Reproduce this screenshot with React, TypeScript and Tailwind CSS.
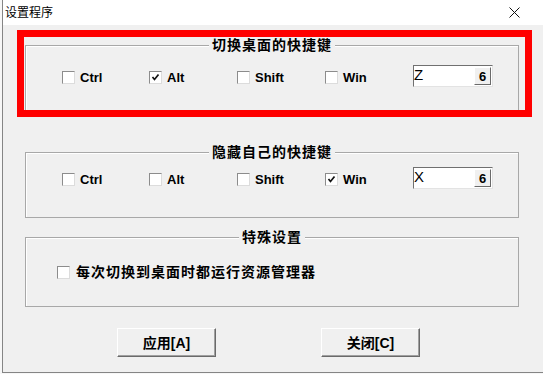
function Check({ checked }: { checked?: boolean }) {
  return (
    <span className="w-[13px] h-[13px] shrink-0 bg-white border border-t-[#8c8c8c] border-l-[#8c8c8c] border-b-[#dcdcdc] border-r-[#dcdcdc] flex items-center justify-center">
      {checked && (
        <svg width="9" height="9" viewBox="0 0 9 9">
          <path d="M1.5 4 L3.5 6.5 L7.5 1.5" stroke="#111" strokeWidth="1.7" fill="none" />
        </svg>
      )}
    </span>
  )
}

function KeyBox({ letter }: { letter: string }) {
  return (
    <div className="w-[80px] h-[22px] bg-white border border-t-[#707070] border-l-[#707070] border-b-[#e3e3e3] border-r-[#e3e3e3] flex items-start justify-between">
      <span className="pt-[1px] text-[15px] leading-[15px] text-black">{letter}</span>
      <span className="mt-[1px] mr-[1px] w-[17px] h-[18px] bg-[#f0f0f0] border border-t-white border-l-white border-b-[#6a6a6a] border-r-[#6a6a6a] flex items-center justify-center text-[13px] font-bold leading-none">
        6
      </span>
    </div>
  )
}

function Row({ checked, letter, className }: { checked: string; letter: string; className: string }) {
  const keys = [
    { k: 'Ctrl', w: 'w-[87px]' },
    { k: 'Alt', w: 'w-[88px]' },
    { k: 'Shift', w: 'w-[88px]' },
    { k: 'Win', w: 'w-[88px]' },
  ]
  return (
    <div className={`flex items-center pl-[36px] h-[22px] ${className}`}>
      {keys.map((item) => (
        <div key={item.k} className={`flex items-center gap-[5px] pt-[3px] ${item.w}`}>
          <Check checked={item.k === checked} />
          <span className="text-[13px] font-bold leading-none">{item.k}</span>
        </div>
      ))}
      <KeyBox letter={letter} />
    </div>
  )
}

function Group({ title, className, children }: { title: string; className: string; children: React.ReactNode }) {
  return (
    <div className={`ml-[22px] w-[494px] border border-[#a8a8a8] shadow-[inset_1px_1px_0_#fff] flex flex-col ${className}`}>
      <span className="self-center -mt-[10px] px-[3px] bg-[#f0f0f0] text-[14px] leading-[18px] font-bold tracking-[1px]">
        {title}
      </span>
      {children}
    </div>
  )
}

function Button({ label, className }: { label: string; className: string }) {
  return (
    <button
      type="button"
      className={`w-[99px] h-[29px] bg-[#f0f0f0] border border-t-white border-l-white border-b-[#6a6a6a] border-r-[#6a6a6a] shadow-[inset_-1px_-1px_0_#a0a0a0] text-[14px] font-bold leading-none ${className}`}
    >
      {label}
    </button>
  )
}

export default function App() {
  return (
    <div className="relative w-[543px] h-[374px] overflow-hidden bg-[#f7f7f7] text-black font-['Liberation_Sans','Noto_Sans_CJK_SC',sans-serif]">
      <div className="ml-[2px] h-[373px] border-l border-b border-[#858585] bg-[#f0f0f0] flex flex-col">
        {/* title bar */}
        <div className="h-[25px] bg-white flex items-center justify-between pl-[2px] pr-[23px]">
          <span className="text-[12px] leading-none -mt-[2px] font-['Noto_Sans_CJK_SC',sans-serif]">设置程序</span>
          <svg width="11" height="11" viewBox="0 0 11 11">
            <path d="M0.5 0.5 L10.5 10.5 M10.5 0.5 L0.5 10.5" stroke="#111" strokeWidth="1" />
          </svg>
        </div>

        <Group title="切换桌面的快捷键" className="mt-[20px] h-[66px]">
          <Row checked="Alt" letter="Z" className="mt-[11px]" />
        </Group>

        <Group title="隐藏自己的快捷键" className="mt-[41px] h-[66px]">
          <Row checked="Win" letter="X" className="mt-[6px]" />
        </Group>

        <Group title="特殊设置" className="mt-[19px] h-[70px]">
          <div className="mt-[18px] ml-[31px] h-[16px] flex items-center gap-[6px]">
            <Check />
            <span className="text-[14px] font-bold leading-none tracking-[1px]">每次切换到桌面时都运行资源管理器</span>
          </div>
        </Group>

        <div className="mt-[21px] flex">
          <Button label="应用[A]" className="ml-[114px]" />
          <Button label="关闭[C]" className="ml-[105px]" />
        </div>
      </div>

      {/* red highlight annotation */}
      <div className="absolute left-[17px] top-[30px] w-[515px] h-[87px] border-[7px] border-[#ff0000]" />
    </div>
  )
}
